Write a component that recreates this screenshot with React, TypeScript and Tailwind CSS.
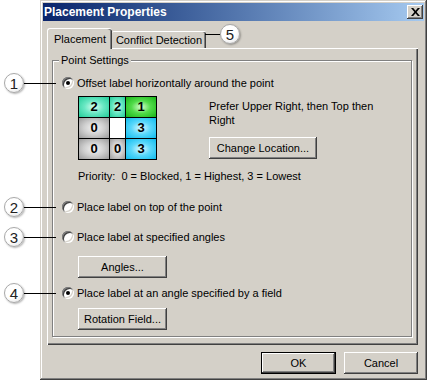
import React from "react";

const btn =
  "flex items-center justify-center bg-[#d4d0c8] text-[11px] text-black shadow-[inset_-1px_-1px_0_#404040,inset_1px_1px_0_#ffffff,inset_-2px_-2px_0_#808080,inset_2px_2px_0_#d4d0c8]";

function Radio({ checked }: { checked?: boolean }) {
  return (
    <span className="relative flex w-[12px] h-[12px] shrink-0 items-center justify-center rounded-full bg-white shadow-[inset_1px_1px_0_#808080,inset_-1px_-1px_0_#ffffff,inset_2px_2px_0_#404040,inset_-2px_-2px_0_#d4d0c8]">
      {checked && <span className="block w-[4px] h-[4px] rounded-full bg-black" />}
    </span>
  );
}

function RadioRow({ checked, label }: { checked?: boolean; label: string }) {
  return (
    <div className="flex h-[14px] items-center gap-[3px]">
      <Radio checked={checked} />
      <span className="text-[11px] leading-[14px] text-black whitespace-nowrap">{label}</span>
    </div>
  );
}

function Callout({ n, x, y, lineFrom, lineTo }: { n: string; x: number; y: number; lineFrom: number; lineTo: number }) {
  return (
    <>
      <div
        className="absolute h-[1px] bg-black"
        style={{ left: lineFrom, top: y, width: lineTo - lineFrom }}
      />
      <div
        className="absolute flex w-[20px] h-[20px] items-center justify-center rounded-full border border-[#a8a8a8] bg-[radial-gradient(circle_at_40%_35%,#ffffff_50%,#dcdcdc_100%)] shadow-[1px_1px_2px_rgba(0,0,0,0.3)] text-[15px] leading-none text-[#222]"
        style={{ left: x - 10, top: y - 10 }}
      >
        {n}
      </div>
    </>
  );
}

const mint = "bg-[radial-gradient(ellipse_at_center,#d8fff0_0%,#6ae8c4_45%,#22cc98_100%)]";
const green = "bg-[radial-gradient(ellipse_at_center,#d8ffd0_0%,#52dc4a_45%,#18b418_100%)]";
const gray = "bg-[radial-gradient(ellipse_at_center,#f4f4f4_0%,#cdcdcd_50%,#9a9a9a_100%)]";
const cyan = "bg-[radial-gradient(ellipse_at_center,#e0faff_0%,#5ad8fb_45%,#10bcee_100%)]";

function Cell({ cls, v }: { cls: string; v?: string }) {
  return (
    <div className={`flex items-center justify-center text-[13px] font-bold text-black ${cls}`}>{v}</div>
  );
}

export default function App() {
  return (
    <div className="relative w-[428px] h-[381px] overflow-hidden bg-white font-['Liberation_Sans',Arial,sans-serif]">
      <div className="ml-[40px] flex w-[387px] h-[380px] flex-col bg-[#d4d0c8] p-[3px] shadow-[inset_-1px_-1px_0_#404040,inset_1px_1px_0_#d4d0c8,inset_-2px_-2px_0_#808080,inset_2px_2px_0_#ffffff]">
        {/* title bar */}
        <div className="flex h-[18px] items-center justify-between bg-linear-to-r from-[#0a246a] to-[#a6caf0] pl-[1px] pr-[1px]">
          <span className="text-[12px] font-bold leading-none text-white whitespace-nowrap">Placement Properties</span>
          <div className={`${btn} w-[16px] h-[14px]`}>
            <svg width="9" height="8" viewBox="0 0 9 8">
              <path d="M0 0h2.2l2.3 2.8L6.8 0H9L5.6 4 9 8H6.8L4.5 5.2 2.2 8H0l3.4-4z" fill="#000" />
            </svg>
          </div>
        </div>

        {/* tabs area */}
        <div className="mt-[7px] pl-[4px] pr-[6px]">
          <div className="flex h-[20px] items-end">
            <div className="relative z-10 -mb-[1px] flex w-[65px] h-[21px] items-center justify-center rounded-t-[3px] border-l border-t border-white bg-[#d4d0c8] text-[11px] text-black shadow-[inset_-1px_0_0_#404040,inset_-2px_0_0_#808080]">
              Placement
            </div>
            <div className="flex w-[94px] h-[17px] items-center justify-center rounded-t-[2px] border-t border-white bg-[#d4d0c8] pt-[1px] text-[11px] text-black shadow-[inset_-1px_0_0_#404040,inset_-2px_0_0_#808080] whitespace-nowrap">
              Conflict Detection
            </div>
          </div>
          <div className="w-[371px] h-[297px] border-l border-t border-white bg-[#d4d0c8] pl-[4px] pt-[11px] shadow-[inset_-1px_-1px_0_#404040,inset_-2px_-2px_0_#808080]">
            <div className="relative w-[360px] h-[277px] border border-[#808080] shadow-[1px_1px_0_#ffffff,inset_1px_1px_0_#ffffff]">
              <span className="absolute -top-[7px] left-[6px] bg-[#d4d0c8] px-[2px] text-[11px] leading-[13px] text-black">
                Point Settings
              </span>
              <div className="flex flex-col pl-[9px] pt-[15px]">
                <RadioRow checked label="Offset label horizontally around the point" />
                <div className="ml-[16px] mt-[6px] flex">
                  <div className="grid grid-cols-[30px_15px_30px] grid-rows-[20px_20px_20px] gap-[1px] bg-black p-[1px]">
                    <Cell cls={mint} v="2" />
                    <Cell cls={mint} v="2" />
                    <Cell cls={green} v="1" />
                    <Cell cls={gray} v="0" />
                    <Cell cls="bg-white" />
                    <Cell cls={cyan} v="3" />
                    <Cell cls={gray} v="0" />
                    <Cell cls={gray} v="0" />
                    <Cell cls={cyan} v="3" />
                  </div>
                  <div className="ml-[52px] flex flex-col pt-[3px]">
                    <span className="text-[11px] leading-[14px] text-black whitespace-nowrap">
                      Prefer Upper Right, then Top then
                      <br />
                      Right
                    </span>
                    <div className={`${btn} mt-[10px] w-[108px] h-[22px]`}>Change Location...</div>
                  </div>
                </div>
                <div className="ml-[16px] mt-[9px] h-[14px] text-[11px] leading-[14px] text-black whitespace-pre">
                  {"Priority:  0 = Blocked, 1 = Highest, 3 = Lowest"}
                </div>
                <div className="mt-[17px]">
                  <RadioRow label="Place label on top of the point" />
                </div>
                <div className="mt-[16px]">
                  <RadioRow label="Place label at specified angles" />
                </div>
                <div className={`${btn} ml-[16px] mt-[12px] w-[89px] h-[22px]`}>Angles...</div>
                <div className="mt-[8px]">
                  <RadioRow checked label="Place label at an angle specified by a field" />
                </div>
                <div className={`${btn} ml-[16px] mt-[8px] w-[89px] h-[22px]`}>Rotation Field...</div>
              </div>
            </div>
          </div>
        </div>

        {/* bottom buttons */}
        <div className="mt-[7px] flex justify-end gap-[8px] pr-[6px]">
          <div className={`${btn} w-[75px] h-[22px] border border-black`}>OK</div>
          <div className={`${btn} w-[74px] h-[22px]`}>Cancel</div>
        </div>
      </div>

      <Callout n="1" x={14} y={83} lineFrom={24} lineTo={56} />
      <Callout n="2" x={14} y={207} lineFrom={24} lineTo={56} />
      <Callout n="3" x={14} y={237} lineFrom={24} lineTo={56} />
      <Callout n="4" x={14} y={293} lineFrom={24} lineTo={56} />
      <Callout n="5" x={230} y={34} lineFrom={205} lineTo={220} />
    </div>
  );
}
